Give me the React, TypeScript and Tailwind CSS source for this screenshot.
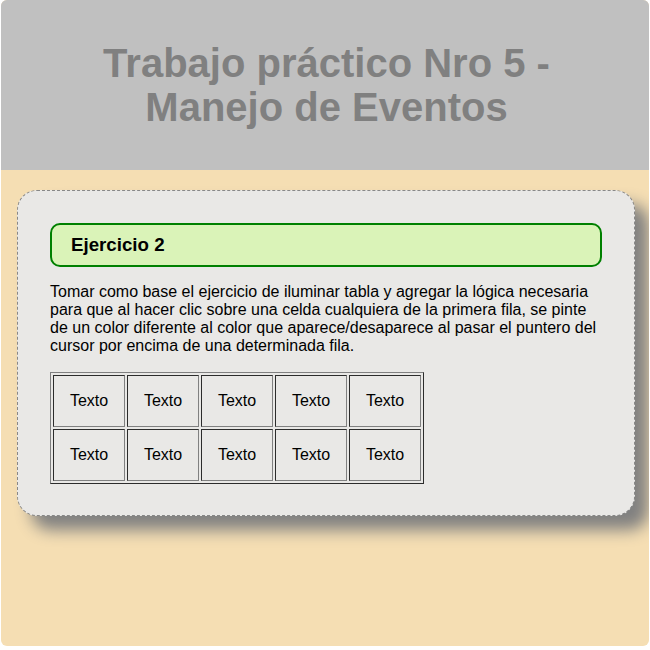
import React from 'react';

const filas = [0, 1];
const celdas = [0, 1, 2, 3, 4];

export default function App() {
  return (
    <div className="w-[650px] h-[650px] bg-white px-px font-['Liberation_Sans',Arial,sans-serif]">
      <div className="h-[646px] rounded-[6px] overflow-hidden bg-[#f5deb3] flex flex-col">
        <header className="h-[170px] bg-[#c0c0c0] pt-[41px] shrink-0">
          <h1 className="text-[40px] leading-[44px] font-bold text-[#808080] text-center pl-[3px]">
            Trabajo práctico Nro 5 -<br />
            Manejo de Eventos
          </h1>
        </header>

        <main className="pt-[20px] pl-[16px]">
          <section className="w-[618px] bg-[#e9e8e6] border border-dashed border-[#888] rounded-[20px] p-[32px] pb-[31px] shadow-[14px_14px_16px_gray]">
            <div className="h-[44px] flex items-center bg-[#daf3b8] border-2 border-[#008000] rounded-[10px] pl-[19px]">
              <h3 className="text-[18.72px] font-bold text-black">Ejercicio 2</h3>
            </div>

            <p className="mt-[16px] text-[16px] leading-[18px] text-black">
              Tomar como base el ejercicio de iluminar tabla y agregar la lógica necesaria para que al hacer clic sobre una celda cualquiera de la primera fila, se pinte de un color diferente al color que aparece/desaparece al pasar el puntero del cursor por encima de una determinada fila.
            </p>

            <table className="mt-[17px] border-separate border-spacing-[2px] border border-[gray] [border-style:outset]">
              <tbody>
                {filas.map((f) => (
                  <tr key={f}>
                    {celdas.map((c) => (
                      <td
                        key={c}
                        className="w-[72px] h-[52px] p-0 text-center align-middle text-[16px] text-black border border-[gray] [border-style:inset]"
                      >
                        Texto
                      </td>
                    ))}
                  </tr>
                ))}
              </tbody>
            </table>
          </section>
        </main>
      </div>
    </div>
  );
}
